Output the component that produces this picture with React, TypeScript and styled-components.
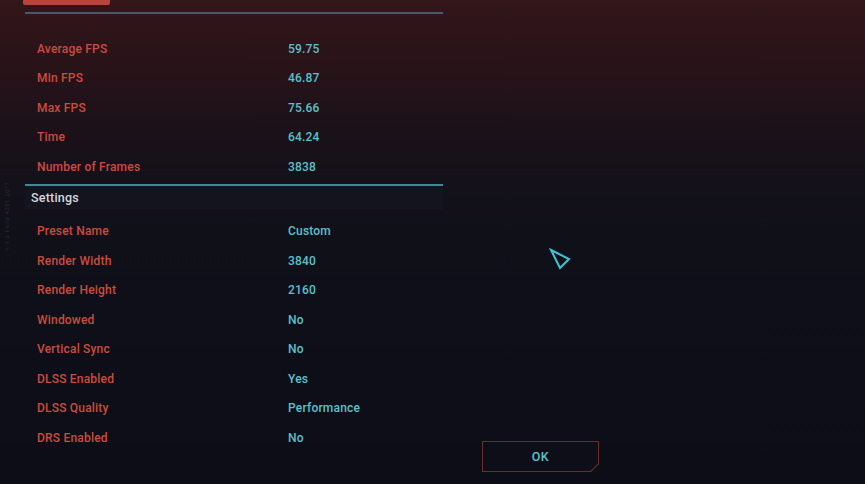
import styled, { createGlobalStyle } from "styled-components";

const GlobalStyle = createGlobalStyle`
  html, body {
    margin: 0;
    padding: 0;
    height: 100%;
  }
  body {
    background: #0d0e16;
    font-family: Roboto, "Liberation Sans", sans-serif;
  }
`;

type Stat = { label: string; value: string };

const results: Stat[] = [
  { label: "Average FPS", value: "59.75" },
  { label: "Min FPS", value: "46.87" },
  { label: "Max FPS", value: "75.66" },
  { label: "Time", value: "64.24" },
  { label: "Number of Frames", value: "3838" },
];

const settings: Stat[] = [
  { label: "Preset Name", value: "Custom" },
  { label: "Render Width", value: "3840" },
  { label: "Render Height", value: "2160" },
  { label: "Windowed", value: "No" },
  { label: "Vertical Sync", value: "No" },
  { label: "DLSS Enabled", value: "Yes" },
  { label: "DLSS Quality", value: "Performance" },
  { label: "DRS Enabled", value: "No" },
];

function StatRow({ label, value }: Stat) {
  return (
    <Row>
      <Label>{label}</Label>
      <Value>{value}</Value>
    </Row>
  );
}

export default function App() {
  return (
    <>
      <GlobalStyle />
      <Screen>
        <SideNote>v 1.3 build 4301 2077</SideNote>
        <Panel>
          <Badge />
          <Divider />
          <Block>
            {results.map((s) => (
              <StatRow key={s.label} {...s} />
            ))}
          </Block>
          <Divider accent />
          <SectionHeader>Settings</SectionHeader>
          <Block settings>
            {settings.map((s) => (
              <StatRow key={s.label} {...s} />
            ))}
          </Block>
        </Panel>
        <Side>
          <OkButton>
            <span>OK</span>
          </OkButton>
        </Side>
        <Cursor width="24" height="24" viewBox="0 0 24 24">
          <path
            d="M3 2 L21 11 L12 20 Z"
            fill="none"
            stroke="#3fc3d3"
            strokeWidth="2"
            strokeLinejoin="miter"
          />
        </Cursor>
      </Screen>
    </>
  );
}

const Screen = styled.div`
  position: relative;
  width: 865px;
  height: 484px;
  overflow: hidden;
  display: flex;
  background: linear-gradient(
    180deg,
    #321619 0%,
    #281319 14%,
    #1a1119 28%,
    #12111a 42%,
    #0e0f18 60%,
    #0c0d16 100%
  );
`;

const SideNote = styled.div`
  position: absolute;
  left: 4px;
  top: 250px;
  transform: rotate(-90deg);
  transform-origin: left top;
  font-size: 5px;
  letter-spacing: 1px;
  color: #2c2c38;
  white-space: nowrap;
`;

const Panel = styled.div`
  width: 418px;
  margin-left: 25px;
  display: flex;
  flex-direction: column;
`;

const Badge = styled.div`
  position: absolute;
  left: 23px;
  top: 0;
  width: 87px;
  height: 5px;
  background: #b8443a;
  border-radius: 0 0 2px 2px;
`;

const Divider = styled.div<{ accent?: boolean }>`
  height: 2px;
  background: ${(p) => (p.accent ? "#3d8c93" : "#4c5869")};
  margin-top: ${(p) => (p.accent ? "2px" : "12px")};
`;

const Block = styled.div<{ settings?: boolean }>`
  display: flex;
  flex-direction: column;
  padding-top: ${(p) => (p.settings ? "8px" : "20px")};
  padding-left: 12px;
`;

const Row = styled.div`
  height: 29.5px;
  display: flex;
  align-items: center;
  font-size: 12px;
  font-weight: 500;
  letter-spacing: 0.2px;
`;

const Label = styled.span`
  width: 251px;
  color: #cc4b3d;
`;

const Value = styled.span`
  color: #5cc0cc;
`;

const SectionHeader = styled.div`
  height: 23px;
  display: flex;
  align-items: center;
  padding-left: 6px;
  background: #14141e;
  color: #d6d6da;
  font-size: 12.5px;
  font-weight: 500;
  letter-spacing: 0.2px;
`;

const Side = styled.div`
  flex: 1;
  display: flex;
  flex-direction: column;
  justify-content: flex-end;
  padding: 0 0 12px 39px;
`;

const OkButton = styled.button`
  width: 117px;
  height: 31px;
  padding: 0;
  border: none;
  background: #6d2b2c;
  clip-path: polygon(0 0, 100% 0, 100% calc(100% - 8px), calc(100% - 8px) 100%, 0 100%);
  position: relative;
  color: #5ec3cf;
  font-family: Roboto, "Liberation Sans", sans-serif;
  font-size: 12.5px;
  font-weight: 500;
  letter-spacing: 0.5px;
  cursor: pointer;

  &::before {
    content: "";
    position: absolute;
    inset: 1px;
    background: #0d0e17;
    clip-path: polygon(0 0, 100% 0, 100% calc(100% - 7.6px), calc(100% - 7.6px) 100%, 0 100%);
  }

  span {
    position: relative;
  }
`;

const Cursor = styled.svg`
  position: absolute;
  left: 548px;
  top: 248px;
`;
